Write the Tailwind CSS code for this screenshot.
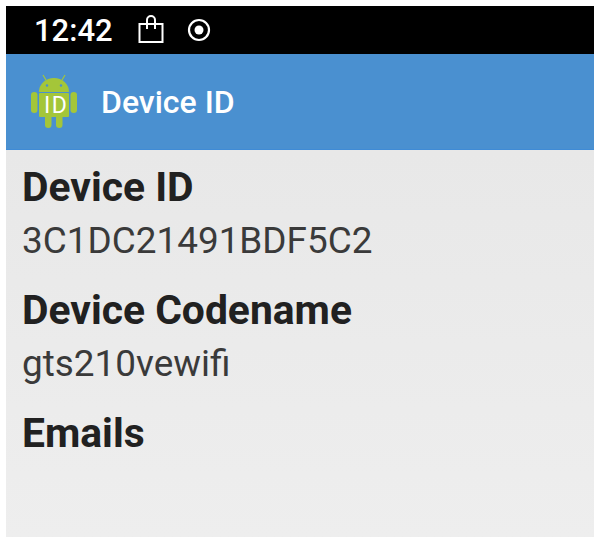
<!DOCTYPE html>
<html lang="en">
	<head>
		<meta charset="UTF-8" />
		<title>Device ID</title>
		<script src="https://cdn.jsdelivr.net/npm/@tailwindcss/browser@4"></script>
	</head>
	<body class="bg-white font-['Roboto',sans-serif]">
		<div class="w-[600px] h-[543px] p-[6px]">
			<div class="h-full flex flex-col">
				<!-- status bar -->
				<div class="h-[48px] bg-black flex items-center pl-[28px] text-white">
					<span class="text-[31px] leading-none font-medium">12:42</span>
					<svg class="ml-[25px] mt-[-2px]" width="26" height="30" viewBox="0 0 26 30" fill="none" stroke="white" stroke-width="2">
						<rect x="1.5" y="10" width="23" height="18" />
						<path d="M9 15V6a4 4 0 0 1 8 0v9" />
					</svg>
					<svg class="ml-[23px]" width="24" height="24" viewBox="0 0 24 24" fill="none">
						<circle cx="12" cy="12" r="10" stroke="white" stroke-width="2.2" />
						<circle cx="12" cy="12" r="4.5" fill="white" />
					</svg>
				</div>
				<!-- app bar -->
				<div class="h-[96px] bg-[#4a90d0] border-b border-[#3f8bd6] flex items-center pl-[24px]">
					<svg width="48" height="56" viewBox="0 0 48 56">
						<g fill="#a4c639">
							<path d="M9 18a15 14 0 0 1 30 0z" />
							<rect x="9" y="19" width="30" height="24" rx="1" />
							<rect x="1" y="18" width="6.5" height="21" rx="3.2" />
							<rect x="40.5" y="18" width="6.5" height="21" rx="3.2" />
							<rect x="15" y="40" width="6.5" height="14" rx="3.2" />
							<rect x="26" y="40" width="6.5" height="14" rx="3.2" />
						</g>
						<path d="M16 6l-3-5M32 6l3-5" stroke="#a4c639" stroke-width="1.2" fill="none" />
						<circle cx="17" cy="11.5" r="1.2" fill="#4a90d0" />
						<circle cx="31" cy="11.5" r="1.2" fill="#4a90d0" />
						<text x="14" y="39" font-family="Roboto" font-weight="400" font-size="23" letter-spacing="1.5" fill="white">ID</text>
					</svg>
					<span class="ml-[23px] text-[32px] font-medium text-white leading-none">Device ID</span>
				</div>
				<!-- content -->
				<div class="flex-1 bg-gradient-to-b from-[#e8e8e8] to-[#eeeeee] pl-[16px] pt-[11px] text-[#212121]">
					<div class="text-[40.8px] font-bold leading-[53px]">Device ID</div>
					<div class="text-[36.9px] leading-[53px] text-[#3a3a3a]">3C1DC21491BDF5C2</div>
					<div class="mt-[17px] text-[40.8px] font-bold leading-[53px]">Device Codename</div>
					<div class="text-[36.9px] leading-[53px] text-[#3a3a3a]">gts210vewifi</div>
					<div class="mt-[17px] text-[40.8px] font-bold leading-[53px]">Emails</div>
				</div>
			</div>
		</div>
	</body>
</html>
